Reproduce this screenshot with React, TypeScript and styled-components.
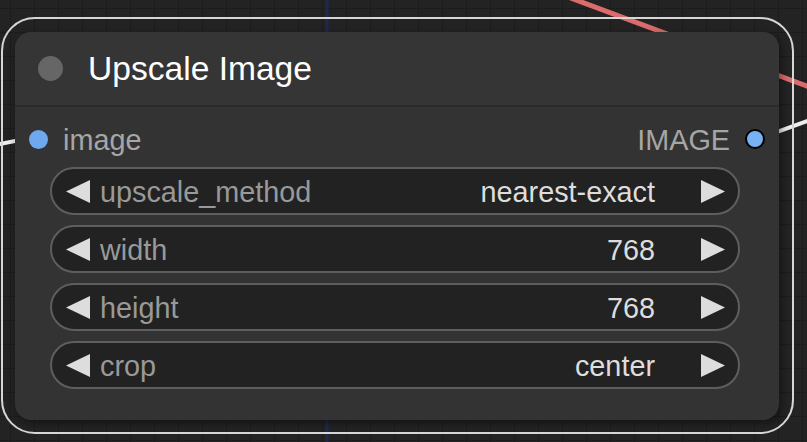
import React from 'react';
import styled, { createGlobalStyle } from 'styled-components';

const GlobalStyle = createGlobalStyle`
  html, body {
    margin: 0;
    padding: 0;
    background: #222;
  }
  body {
    font-family: "Liberation Sans", Arial, sans-serif;
    overflow: hidden;
  }
  * { box-sizing: border-box; }
`;

const Canvas = styled.div`
  position: relative;
  width: 807px;
  height: 442px;
  overflow: hidden;
  background-color: #232323;
  background-image:
    linear-gradient(to right, #1c1c1c 1px, transparent 1px),
    linear-gradient(to bottom, #1c1c1c 1px, transparent 1px);
  background-size: 24px 24px;
  background-position: 10px 8px;
`;

const Wires = styled.svg`
  position: absolute;
  inset: 0;
`;

/* node sits on the graph canvas at its own coordinates */
const Node = styled.div`
  position: absolute;
  left: 15px;
  top: 32px;
  width: 764px;
  height: 388px;
  border-radius: 16px;
  background: #333;
  box-shadow: 2px 3px 8px rgba(0, 0, 0, 0.45);
  display: flex;
  flex-direction: column;

  /* selection outline */
  &::after {
    content: '';
    position: absolute;
    top: -15px;
    left: -14px;
    right: -15px;
    bottom: -14px;
    border: 2px solid #d6d6d6;
    border-radius: 34px;
    pointer-events: none;
  }
`;

const TitleBar = styled.div`
  height: 75px;
  display: flex;
  align-items: center;
  gap: 25px;
  padding-left: 23px;
  background: #353535;
  border-radius: 16px 16px 0 0;
  border-bottom: 2px solid #2a2a2a;
`;

const TitleDot = styled.div`
  width: 25px;
  height: 25px;
  border-radius: 50%;
  background: #666;
`;

const Title = styled.div`
  font-size: 33.6px;
  color: #fff;
`;

const SlotRow = styled.div`
  margin-top: 8px;
  height: 48px;
  padding: 0 14px;
  display: flex;
  align-items: center;
  justify-content: space-between;
`;

const Slot = styled.div`
  display: flex;
  align-items: center;
  gap: 15px;
`;

const SlotDot = styled.div<{ $output?: boolean }>`
  width: ${p => (p.$output ? 20 : 19)}px;
  height: ${p => (p.$output ? 20 : 19)}px;
  border-radius: 50%;
  background: ${p => (p.$output ? '#76b1f4' : '#6fa8ef')};
  border: ${p => (p.$output ? '2px solid #000' : 'none')};
`;

const SlotLabel = styled.span`
  font-size: 28.8px;
  color: #a6a6a6;
  padding-top: 2px;
`;

const Widgets = styled.div`
  margin: 4px 39px 0 35px;
  display: flex;
  flex-direction: column;
  gap: 10px;
`;

const Widget = styled.div`
  height: 48px;
  border-radius: 24px;
  background: #222;
  border: 2px solid #5e5e5e;
  padding: 0 13px 0 14px;
  display: flex;
  align-items: center;
  font-size: 28.8px;
`;

const WidgetLabel = styled.span`
  margin-left: 10px;
  padding-top: 2px;
  color: #999;
`;

const WidgetValue = styled.span`
  flex: 1;
  text-align: right;
  margin-right: 46px;
  padding-top: 2px;
  color: #ddd;
`;

const Arrow = ({ dir }: { dir: 'left' | 'right' }) => (
  <svg width="24" height="23" viewBox="0 0 24 23">
    <polygon
      points={dir === 'left' ? '0,11.5 24,0 24,23' : '24,11.5 0,0 0,23'}
      fill="#ddd"
    />
  </svg>
);

const widgets = [
  { name: 'upscale_method', value: 'nearest-exact' },
  { name: 'width', value: '768' },
  { name: 'height', value: '768' },
  { name: 'crop', value: 'center' },
];

export default function App() {
  return (
    <>
      <GlobalStyle />
      <Canvas>
        <Wires width="807" height="442">
          <line x1="327" y1="0" x2="327" y2="442" stroke="#1f2850" strokeWidth="3" />
          <line x1="560" y1="-6" x2="820" y2="91" stroke="#dc6b6b" strokeWidth="5" />
          <path d="M -10 146 L 30 138" stroke="#eee" strokeWidth="4" fill="none" />
          <path d="M 760 138 L 810 120" stroke="#eee" strokeWidth="4" fill="none" />
        </Wires>
        <Node>
          <TitleBar>
            <TitleDot />
            <Title>Upscale Image</Title>
          </TitleBar>
          <SlotRow>
            <Slot>
              <SlotDot />
              <SlotLabel>image</SlotLabel>
            </Slot>
            <Slot>
              <SlotLabel>IMAGE</SlotLabel>
              <SlotDot $output />
            </Slot>
          </SlotRow>
          <Widgets>
            {widgets.map(w => (
              <Widget key={w.name}>
                <Arrow dir="left" />
                <WidgetLabel>{w.name}</WidgetLabel>
                <WidgetValue>{w.value}</WidgetValue>
                <Arrow dir="right" />
              </Widget>
            ))}
          </Widgets>
        </Node>
      </Canvas>
    </>
  );
}
